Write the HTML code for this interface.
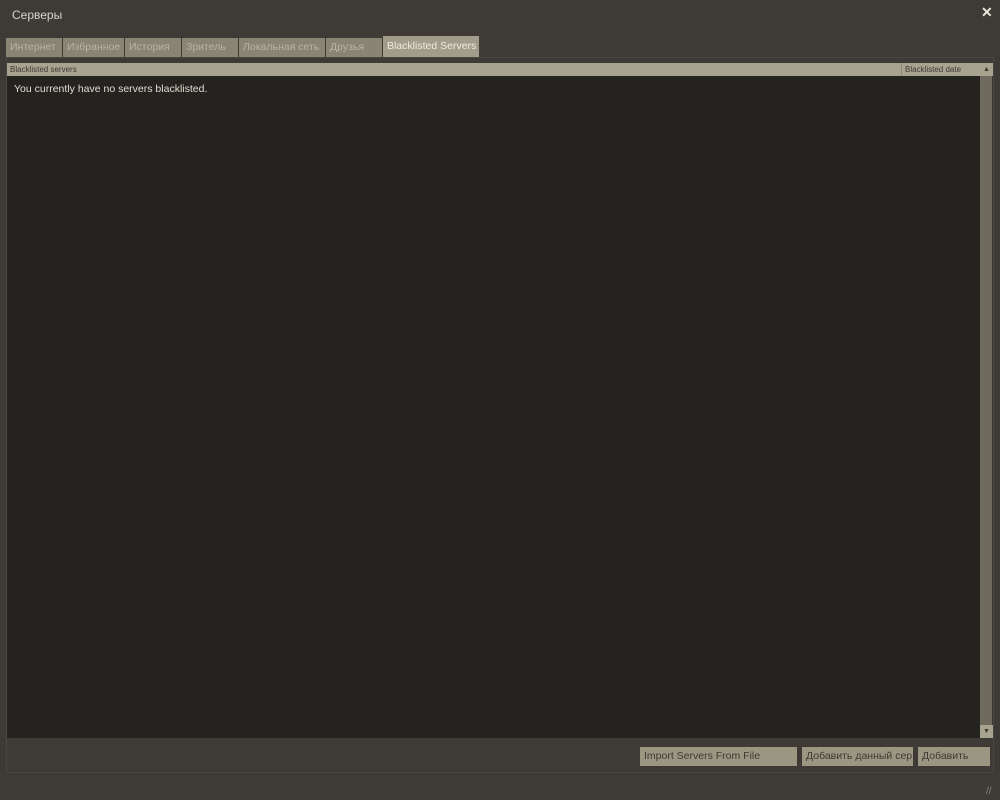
<!DOCTYPE html>
<html><head><style>
body{margin:0;width:1000px;height:800px;background:#3e3a36;font-family:"Liberation Sans","Noto Sans CJK SC",sans-serif;position:relative;overflow:hidden}
.a{position:absolute;white-space:nowrap}
.t{position:absolute;top:38px;height:19px;background:#898474;color:#b9b4a4;font-size:10.5px;line-height:19px;padding-left:4px;box-sizing:border-box;white-space:nowrap;overflow:hidden}
.b{position:absolute;top:747px;height:19px;background:#9b9682;color:#3d3933;font-size:10.5px;line-height:19px;padding-left:4px;box-sizing:border-box;white-space:nowrap;overflow:hidden}
</style></head><body>
<div class="a" style="left:12px;top:8px;color:#d8d4c8;font-size:12px">Серверы</div>
<div class="a" style="left:981px;top:4px;color:#e8e4d8;font-size:14px;font-weight:bold">✕</div>
<div class="t" style="left:6px;width:56px">Интернет</div>
<div class="t" style="left:63px;width:61px">Избранное</div>
<div class="t" style="left:125px;width:56px">История</div>
<div class="t" style="left:182px;width:56px">Зритель</div>
<div class="t" style="left:239px;width:86px">Локальная сеть</div>
<div class="t" style="left:326px;width:56px">Друзья</div>
<div class="t" style="left:383px;top:36px;height:21px;width:96px;background:#a29d8a;color:#f0ece0;line-height:21px">Blacklisted Servers</div>
<div class="a" style="left:6px;top:57px;width:988px;height:716px;border:1px solid #4a4640;box-sizing:border-box"></div>
<div class="a" style="left:7px;top:63px;width:973px;height:13px;background:#a8a38f"></div>
<div class="a" style="left:10px;top:65px;font-size:8px;color:#3d3933">Blacklisted servers</div>
<div class="a" style="left:901px;top:63px;width:1px;height:13px;background:#8c8776"></div>
<div class="a" style="left:905px;top:65px;font-size:8px;color:#3d3933">Blacklisted date</div>
<div class="a" style="left:7px;top:76px;width:973px;height:662px;background:#252320"></div>
<div class="a" style="left:980px;top:63px;width:13px;height:675px;background:#3b3833"></div>
<div class="a" style="left:980px;top:63px;width:13px;height:13px;background:#a8a38f;color:#3d3933;font-size:7px;text-align:center;line-height:13px">▲</div>
<div class="a" style="left:980px;top:76px;width:12px;height:649px;background:#6e6a5e"></div>
<div class="a" style="left:980px;top:725px;width:13px;height:13px;background:#a8a38f;color:#3d3933;font-size:7px;text-align:center;line-height:13px">▼</div>
<div class="a" style="left:14px;top:83px;font-size:10.5px;color:#e0dcd0">You currently have no servers blacklisted.</div>
<div class="b" style="left:640px;width:157px">Import Servers From File</div>
<div class="b" style="left:802px;width:111px">Добавить данный сер...</div>
<div class="b" style="left:918px;width:72px">Добавить</div>
<div class="a" style="left:986px;top:786px;color:#8a857a;font-size:10px">//</div>
</body></html>
